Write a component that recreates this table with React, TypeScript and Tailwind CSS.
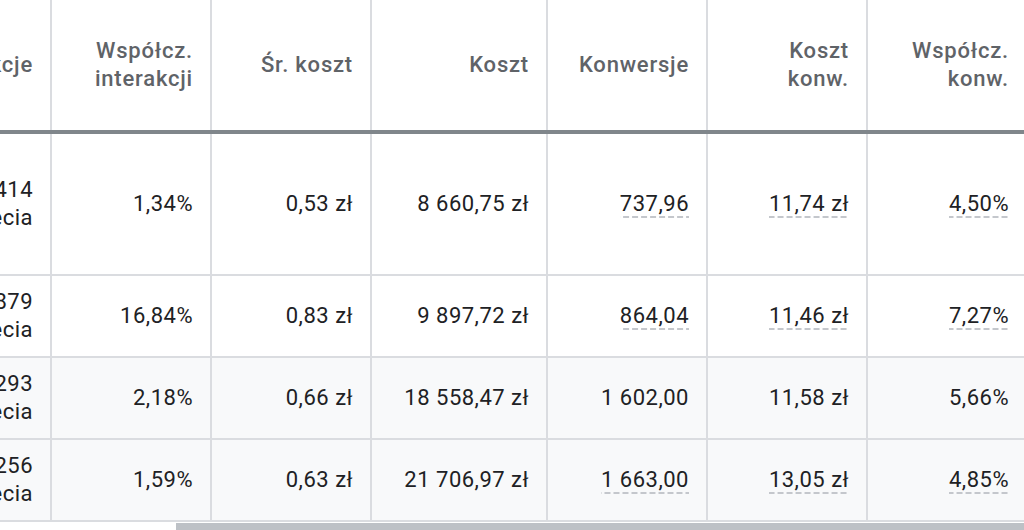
const widths = ['w-[52px]', 'w-[160px]', 'w-[160px]', 'w-[176px]', 'w-[160px]', 'w-[160px]', 'w-[160px]'];

const headers: string[][] = [
  ['Interakcje'],
  ['Współcz.', 'interakcji'],
  ['Śr. koszt'],
  ['Koszt'],
  ['Konwersje'],
  ['Koszt', 'konw.'],
  ['Współcz.', 'konw.'],
];

interface Row {
  interactions: string;
  rate: string;
  avgCost: string;
  cost: string;
  conv: string;
  convCost: string;
  convRate: string;
  dashed: boolean;
  shaded: boolean;
  tall?: boolean;
}

const rows: Row[] = [
  { interactions: '16 414', rate: '1,34%', avgCost: '0,53 zł', cost: '8 660,75 zł', conv: '737,96', convCost: '11,74 zł', convRate: '4,50%', dashed: true, shaded: false, tall: true },
  { interactions: '11 879', rate: '16,84%', avgCost: '0,83 zł', cost: '9 897,72 zł', conv: '864,04', convCost: '11,46 zł', convRate: '7,27%', dashed: true, shaded: false },
  { interactions: '28 293', rate: '2,18%', avgCost: '0,66 zł', cost: '18 558,47 zł', conv: '1 602,00', convCost: '11,58 zł', convRate: '5,66%', dashed: false, shaded: true },
  { interactions: '34 256', rate: '1,59%', avgCost: '0,63 zł', cost: '21 706,97 zł', conv: '1 663,00', convCost: '13,05 zł', convRate: '4,85%', dashed: true, shaded: true },
];

function Dashed({ children, on }: { children: string; on: boolean }) {
  if (!on) return <span className="inline-block">{children}</span>;
  return (
    <span className="inline-block bg-[linear-gradient(to_right,#c4c7cc_6px,transparent_6px)] bg-[length:9px_2px] bg-repeat-x bg-bottom">
      {children}
    </span>
  );
}

export default function App() {
  return (
    <div className="w-[1024px] h-[530px] overflow-hidden bg-white font-['Roboto',sans-serif] text-[22px] leading-[28px] tracking-[0.5px]">
      <div className="flex flex-col w-max">
        <div className="flex h-[134px] border-b-4 border-[#80868b]">
          {headers.map((h, i) => (
            <div
              key={i}
              className={`${widths[i]} shrink-0 flex flex-col items-end justify-center border-r-2 border-[#dadce0] pr-[17px] text-right font-medium tracking-[0.8px] text-[#5f6368] whitespace-nowrap`}
            >
              {h.map((line) => (
                <span key={line}>{line}</span>
              ))}
            </div>
          ))}
        </div>

        {rows.map((r) => {
          const cells = [r.rate, r.avgCost, r.cost];
          const convCells = [r.conv, r.convCost, r.convRate];
          return (
            <div
              key={r.interactions}
              className={`flex ${r.tall ? 'h-[142px]' : 'h-[82px]'} border-b-2 border-[#dadce0] ${r.shaded ? 'bg-[#f8f9fa]' : 'bg-white'} text-[#202124]`}
            >
              <div className={`${widths[0]} shrink-0 flex flex-col items-end justify-center border-r-2 border-[#dadce0] pr-[17px] whitespace-nowrap`}>
                <span>{r.interactions}</span>
                <span>kliknięcia</span>
              </div>
              {cells.map((c, i) => (
                <div key={i} className={`${widths[i + 1]} shrink-0 flex items-center justify-end border-r-2 border-[#dadce0] pr-[17px] whitespace-nowrap`}>
                  {c}
                </div>
              ))}
              {convCells.map((c, i) => (
                <div key={i} className={`${widths[i + 4]} shrink-0 flex items-center justify-end border-r-2 border-[#dadce0] pr-[17px] whitespace-nowrap`}>
                  <Dashed on={r.dashed}>{c}</Dashed>
                </div>
              ))}
            </div>
          );
        })}
      </div>
      <div className="mt-[1px] ml-[176px] h-[7px] bg-[#bdc1c6]" />
    </div>
  );
}
